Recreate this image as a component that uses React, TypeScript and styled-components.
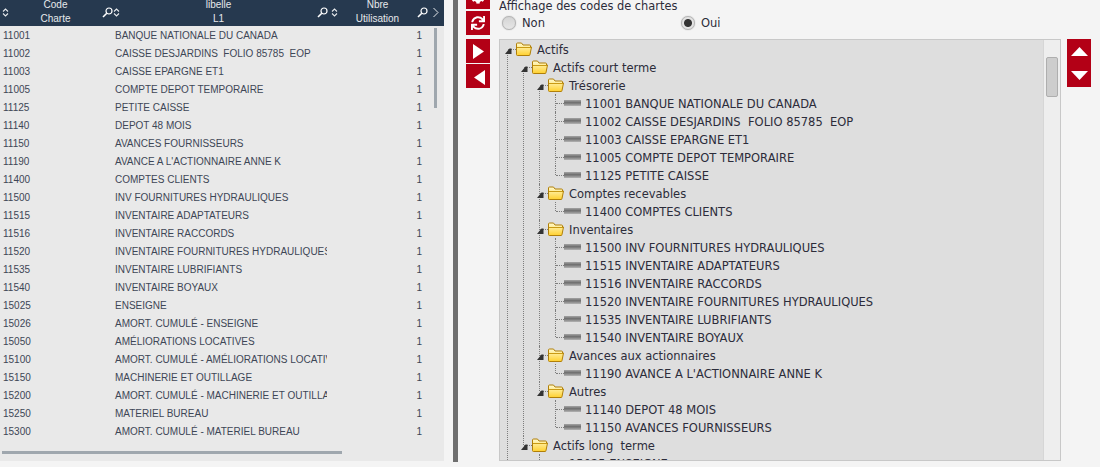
import React from 'react';
import styled, { createGlobalStyle } from 'styled-components';
import { FaCog, FaSync } from 'react-icons/fa';

const GlobalStyle = createGlobalStyle`
    html, body {
        margin: 0;
        padding: 0;
        background: #f4f4f4;
        overflow: hidden;
    }
`;

const Page = styled.div`
    display: flex;
    width: 1100px;
    height: 467px;
    overflow: hidden;
    background: #f4f4f4;
`;

/* left grid */
const GridPanel = styled.section`
    position: relative;
    flex: none;
    width: 444px;
    height: 461px;
    background: #e9e9e9;
    font-family: "Liberation Sans", Arial, sans-serif;
    font-size: 10px;
`;

const GridHead = styled.div`
    display: grid;
    grid-template-columns: 111px 218px 108px;
    height: 26px;
    padding-left: 2px;
    overflow: hidden;
    background: #26394f;
    color: #e6e9ec;
`;

const HeadCell = styled.div<{ $right: number }>`
    display: flex;
    align-items: flex-end;
    height: 26px;
    padding: 0 ${p => p.$right}px 1px 0;
    box-sizing: border-box;
`;

const HeadTitle = styled.div`
    flex: 1;
    margin-bottom: -1px;
    text-align: center;
    line-height: 14px;
`;

const HeadIcon = styled.svg<{ $gap?: number }>`
    flex: none;
    align-self: center;
    margin-left: ${p => p.$gap ?? 0}px;
`;

const GridRow = styled.div`
    display: grid;
    grid-template-columns: 113px 214px 95px;
    height: 18px;
    padding-top: 1px;
    box-sizing: border-box;
    line-height: 18px;
    color: #3d4656;
`;

const Code = styled.div`
    padding-left: 3px;
`;

const Label = styled.div`
    padding-left: 2px;
    overflow: hidden;
    white-space: pre;
`;

const Count = styled.div`
    text-align: right;
`;

const VScroll = styled.div`
    position: absolute;
    left: 434px;
    top: 28px;
    width: 3px;
    height: 80px;
    background: #9fa7ae;
`;

const HScroll = styled.div`
    position: absolute;
    left: 2px;
    top: 451px;
    width: 340px;
    height: 3px;
    background: #9fa7ae;
`;

const Divider = styled.div`
    flex: none;
    width: 5px;
    height: 462px;
    margin-left: 9px;
    background: #6f6f6f;
`;

/* right side */
const ButtonColumn = styled.div<{ $top: number; $left: number }>`
    flex: none;
    display: flex;
    flex-direction: column;
    width: 24px;
    margin-top: ${p => p.$top}px;
    margin-left: ${p => p.$left}px;
`;

const RedButton = styled.button<{ $gap?: number }>`
    display: flex;
    align-items: center;
    justify-content: center;
    width: 24px;
    height: 24px;
    margin: 0 0 ${p => p.$gap ?? 0}px;
    padding: 0;
    border: 0;
    background: #b30016;
    color: #fff;
    font-size: 14px;
`;

const ArrowIcon = styled.svg<{ $shiftX?: number; $shiftY?: number }>`
    margin-left: ${p => p.$shiftX ?? 0}px;
    margin-top: ${p => p.$shiftY ?? 0}px;
`;

const Content = styled.div`
    flex: none;
    width: 562px;
    margin: 0 6px 0 9px;
    font-family: Tahoma, "DejaVu Sans", sans-serif;
    font-size: 11.5px;
    color: #2c2c3a;
`;

const Options = styled.div`
    height: 39px;
    overflow: hidden;
`;

const OptionTitle = styled.div`
    height: 14px;
    line-height: 13px;
    font-size: 11.4px;
`;

const RadioRow = styled.div`
    display: flex;
    height: 18px;
    padding-left: 3px;
`;

const RadioItem = styled.label`
    display: flex;
    align-items: center;
    gap: 6px;
    width: 179px;
`;

const RadioDot = styled.span<{ $on?: boolean }>`
    box-sizing: border-box;
    display: block;
    width: 14px;
    height: 14px;
    border-radius: 50%;
    border: 1px solid #b2b2b2;
    box-shadow: 0 0 1px #999;
    background: ${p => p.$on
        ? 'radial-gradient(circle, #333 0 3.5px, #e4e4e4 4.5px)'
        : 'linear-gradient(#d4d4d4, #e6e6e6)'};
`;

const TreePanel = styled.div`
    position: relative;
    box-sizing: border-box;
    height: 422px;
    overflow: hidden;
    border: 1px solid #c8c8c8;
    background: #dedede;
`;

const TreeTrack = styled.div`
    position: absolute;
    right: 0;
    top: 0;
    bottom: 0;
    width: 16px;
    border-left: 1px solid #d6d6d6;
    background: #eeeeee;
`;

const TreeThumb = styled.div`
    position: absolute;
    left: 2px;
    top: 17px;
    width: 12px;
    height: 40px;
    box-sizing: border-box;
    border: 1px solid #aeaeae;
    border-radius: 2px;
    background: #cdcdcd;
`;

const List = styled.ul<{ $root?: boolean }>`
    list-style: none;
    margin: 0 0 0 ${p => (p.$root ? 7 : 15)}px;
    padding: 0;
`;

const Node = styled.li<{ $startMid?: boolean }>`
    position: relative;
    padding-left: 1px;

    &::before {
        content: '';
        position: absolute;
        left: 0;
        top: ${p => (p.$startMid ? 12 : 0)}px;
        bottom: 0;
        border-left: 1px dotted #7d7d7d;
    }

    &:last-child::before {
        bottom: auto;
        height: 9px;
    }
`;

const Row = styled.div`
    position: relative;
    display: flex;
    align-items: center;
    height: 18px;
    white-space: pre;
`;

const RowLabel = styled.span`
    margin-top: 2px;
`;

const Connector = styled.span`
    flex: none;
    width: 8px;
    border-top: 1px dotted #7d7d7d;
`;

const Toggle = styled.svg`
    position: absolute;
    left: -3px;
    top: 8px;
`;

const RowIcon = styled.svg`
    flex: none;
    margin-right: 5px;
`;

const LeafBar = styled.span`
    flex: none;
    width: 17px;
    height: 6px;
    margin-right: 4px;
    background: linear-gradient(#a4a4a4, #6e6e6e 45%, #b4b4b4);
`;

type TreeItem = { label: string; children?: TreeItem[] };

const rows: [string, string][] = [
    ['11001', 'BANQUE NATIONALE DU CANADA'],
    ['11002', 'CAISSE DESJARDINS  FOLIO 85785  EOP'],
    ['11003', 'CAISSE EPARGNE ET1'],
    ['11005', 'COMPTE DEPOT TEMPORAIRE'],
    ['11125', 'PETITE CAISSE'],
    ['11140', 'DEPOT 48 MOIS'],
    ['11150', 'AVANCES FOURNISSEURS'],
    ['11190', "AVANCE A L'ACTIONNAIRE ANNE K"],
    ['11400', 'COMPTES CLIENTS'],
    ['11500', 'INV FOURNITURES HYDRAULIQUES'],
    ['11515', 'INVENTAIRE ADAPTATEURS'],
    ['11516', 'INVENTAIRE RACCORDS'],
    ['11520', 'INVENTAIRE FOURNITURES HYDRAULIQUES'],
    ['11535', 'INVENTAIRE LUBRIFIANTS'],
    ['11540', 'INVENTAIRE BOYAUX'],
    ['15025', 'ENSEIGNE'],
    ['15026', 'AMORT. CUMULÉ - ENSEIGNE'],
    ['15050', 'AMÉLIORATIONS LOCATIVES'],
    ['15100', 'AMORT. CUMULÉ - AMÉLIORATIONS LOCATIVES'],
    ['15150', 'MACHINERIE ET OUTILLAGE'],
    ['15200', 'AMORT. CUMULÉ - MACHINERIE ET OUTILLAGE'],
    ['15250', 'MATERIEL BUREAU'],
    ['15300', 'AMORT. CUMULÉ - MATERIEL BUREAU'],
];

const leaves = (codes: string[]): TreeItem[] =>
    codes.map(code => {
        const row = rows.find(r => r[0] === code);
        return { label: `${code} ${row ? row[1] : ''}` };
    });

const tree: TreeItem[] = [
    {
        label: 'Actifs',
        children: [
            {
                label: 'Actifs court terme',
                children: [
                    { label: 'Trésorerie', children: leaves(['11001', '11002', '11003', '11005', '11125']) },
                    { label: 'Comptes recevables', children: leaves(['11400']) },
                    { label: 'Inventaires', children: leaves(['11500', '11515', '11516', '11520', '11535', '11540']) },
                    { label: 'Avances aux actionnaires', children: leaves(['11190']) },
                    { label: 'Autres', children: leaves(['11140', '11150']) },
                ],
            },
            {
                label: 'Actifs long  terme',
                children: leaves(['15025', '15026']),
            },
        ],
    },
    { label: 'Passifs' },
];

const SortIcon = () => (
    <HeadIcon width="7" height="9" viewBox="0 0 7 9">
        <path d="M1 3.5 L3.5 1 L6 3.5 M1 5.5 L3.5 8 L6 5.5" fill="none" stroke="#e6e9ec" strokeWidth="1.1" />
    </HeadIcon>
);

const SearchIcon = () => (
    <HeadIcon width="11" height="11" viewBox="0 0 11 11">
        <circle cx="7" cy="4" r="3" fill="none" stroke="#fff" strokeWidth="1.2" />
        <path d="M4.8 6.2 L1 10" stroke="#fff" strokeWidth="1.6" />
    </HeadIcon>
);

const FolderIcon = () => (
    <RowIcon width="16" height="14" viewBox="0 0 16 14">
        <defs>
            <linearGradient id="folderFill" x1="0" y1="0" x2="0" y2="1">
                <stop offset="0" stopColor="#fffbd0" />
                <stop offset="1" stopColor="#ffd02e" />
            </linearGradient>
        </defs>
        <path d="M0.5 12.5 V2 Q0.5 1 1.5 1 H5.5 L7 3 H13.5 Q14.5 3 14.5 4 V5 H15.5 L14 12.5 Q14 13.5 13 13.5 H1.5 Q0.5 13.5 0.5 12.5 Z" fill="url(#folderFill)" stroke="#b07f08" />
        <path d="M1 5.5 H15" stroke="#c99a14" />
    </RowIcon>
);

const TreeNode = ({ item, first }: { item: TreeItem; first?: boolean }) => (
    <Node $startMid={first && !!item.children}>
        <Row>
            <Connector />
            {item.children && (
                <Toggle width="7" height="6" viewBox="0 0 7 6">
                    <path d="M0 6 L4.5 0.5 L6.5 0.5 L6.5 6 Z" fill="#333" />
                </Toggle>
            )}
            {item.children ? <FolderIcon /> : <LeafBar />}
            <RowLabel>{item.label}</RowLabel>
        </Row>
        {item.children && (
            <List>
                {item.children.map((child, i) => (
                    <TreeNode key={child.label} item={child} first={i === 0} />
                ))}
            </List>
        )}
    </Node>
);

const App = () => (
    <Page>
        <GlobalStyle />
        <GridPanel>
            <GridHead>
                <HeadCell $right={0}>
                    <SortIcon />
                    <HeadTitle>Code<br />Charte</HeadTitle>
                    <SearchIcon />
                </HeadCell>
                <HeadCell $right={3}>
                    <SortIcon />
                    <HeadTitle>libelle<br />L1</HeadTitle>
                    <SearchIcon />
                </HeadCell>
                <HeadCell $right={0}>
                    <SortIcon />
                    <HeadTitle>Nbre<br />Utilisation</HeadTitle>
                    <SearchIcon />
                    <HeadIcon $gap={4} width="7" height="11" viewBox="0 0 7 11">
                        <path d="M1.5 1 L6 5.5 L1.5 10" fill="none" stroke="#e6e9ec" />
                    </HeadIcon>
                </HeadCell>
            </GridHead>
            {rows.map(([code, label]) => (
                <GridRow key={code}>
                    <Code>{code}</Code>
                    <Label>{label}</Label>
                    <Count>1</Count>
                </GridRow>
            ))}
            <VScroll />
            <HScroll />
        </GridPanel>
        <Divider />
        <ButtonColumn $top={-15} $left={8}>
            <RedButton $gap={2}><FaCog /></RedButton>
            <RedButton $gap={4}><FaSync /></RedButton>
            <RedButton $gap={1}>
                <ArrowIcon width="11" height="15" viewBox="0 0 11 15"><path d="M0 0 L11 7.5 L0 15 Z" fill="#fff" /></ArrowIcon>
            </RedButton>
            <RedButton>
                <ArrowIcon $shiftX={2} $shiftY={3} width="11" height="15" viewBox="0 0 11 15"><path d="M11 0 L0 7.5 L11 15 Z" fill="#fff" /></ArrowIcon>
            </RedButton>
        </ButtonColumn>
        <Content>
            <Options>
                <OptionTitle>Affichage des codes de chartes</OptionTitle>
                <RadioRow>
                    <RadioItem><RadioDot />Non</RadioItem>
                    <RadioItem><RadioDot $on />Oui</RadioItem>
                </RadioRow>
            </Options>
            <TreePanel>
                <List $root>
                    {tree.map((item, i) => (
                        <TreeNode key={item.label} item={item} first={i === 0} />
                    ))}
                </List>
                <TreeTrack><TreeThumb /></TreeTrack>
            </TreePanel>
        </Content>
        <ButtonColumn $top={39} $left={0}>
            <RedButton>
                <svg width="17" height="9" viewBox="0 0 17 9"><path d="M8.5 0 L17 9 H0 Z" fill="#fff" /></svg>
            </RedButton>
            <RedButton>
                <svg width="17" height="9" viewBox="0 0 17 9"><path d="M0 0 H17 L8.5 9 Z" fill="#fff" /></svg>
            </RedButton>
        </ButtonColumn>
    </Page>
);

export default App;
